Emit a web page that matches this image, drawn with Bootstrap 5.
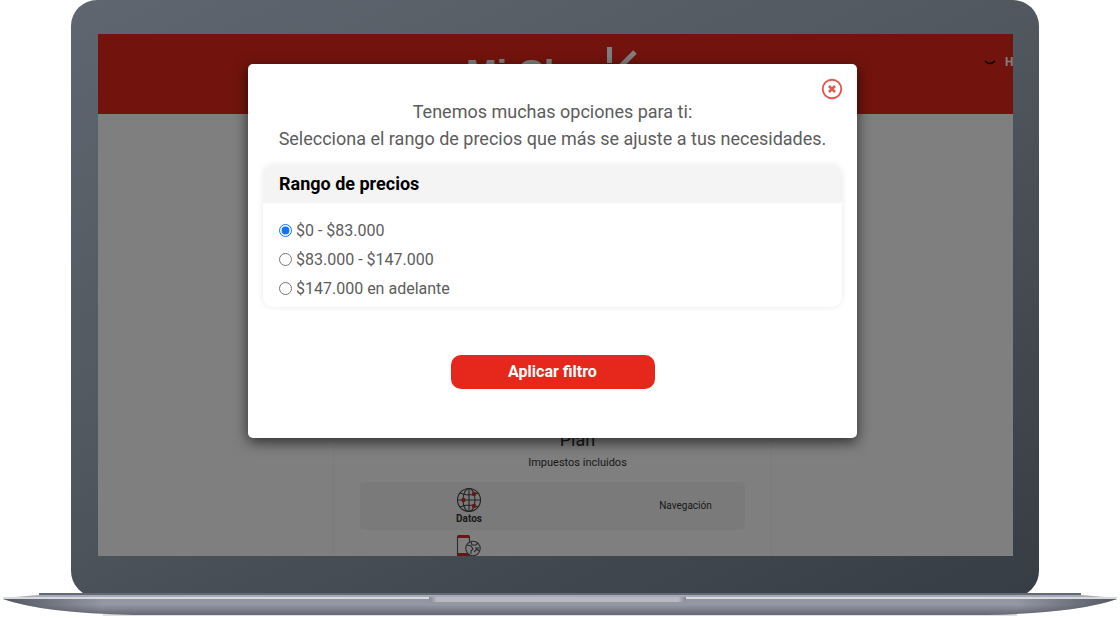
<!DOCTYPE html>
<html lang="es">
<head>
<meta charset="utf-8">
<meta name="viewport" content="width=device-width, initial-scale=1">
<title>Mi Claro - Rango de precios</title>
<link href="https://cdn.jsdelivr.net/npm/bootstrap@5.3.0/dist/css/bootstrap.min.css" rel="stylesheet">
<style>
  body { font-family: Roboto, "Liberation Sans", sans-serif; color: #5c5c5c; background: #fff; }
  .lid { margin: 0 81px -4px 71px; padding: 34px 26px 41px 27px; border-radius: 26px; background: linear-gradient(155deg, #5f666f 0%, #50575f 45%, #41484f 75%, #373d44 100%); min-height: 0; }
  .screen { background: #fff; min-height: 0; }
  .site-bar { background: #e5281b; height: 80px; color: #fff; flex: none; }
  .brand-name { font-family: "Liberation Sans", sans-serif; font-size: 37px; line-height: 40px; font-weight: 700; color: #fff; margin-left: 368px; padding-top: 20px; }
  .brand-ray { top: 13px; left: 507px; }
  .user-link { top: 19px; left: calc(100% - 29px); font-size: 12px; line-height: 18px; font-weight: 700; color: #fff; gap: 9px; white-space: nowrap; }
  .plan-card { margin: 198px 242px 0 236px; padding: 115px 25px 0; border: 1px solid #fafafa; box-shadow: 0 0 4px rgba(0,0,0,.05); color: #333; height: 600px; flex: none; }
  .plan-head { padding-left: 50px; }
  .plan-name { font-size: 18px; line-height: 24px; font-weight: 400; }
  .plan-tax { font-size: 11px; line-height: 16px; margin-top: 3px; }
  .feature { height: 48px; border-radius: 4px; font-size: 10px; line-height: 12px; }
  .feature.shaded { background: #f5f5f5; margin-top: 11px; }
  .feature-key { width: 218px; }
  .veil { background: rgba(0,0,0,.5); padding: 30px 156px 0 150px; }
  .dialog-box { background: #fff; border-radius: 5px; padding: 34px 15px 49px; box-shadow: 0 4px 14px rgba(0,0,0,.65); }
  .dialog-close { top: 14px; right: 14px; line-height: 0; }
  .intro { font-size: 18px; line-height: 27px; margin-bottom: 13px; }
  .price-panel { border-radius: 10px; box-shadow: 0 0 6px rgba(0,0,0,.09); margin-bottom: 48px; }
  .price-title { font-size: 18px; line-height: 22px; padding: 8px 16px; font-weight: 700; color: #000; background: #f4f4f4; border-radius: 10px 10px 0 0; }
  .price-options { padding: 13px 16px 4px; font-size: 16px; line-height: 29px; }
  .price-options input { width: 13px; height: 13px; margin: 0 4px 0 0; accent-color: #0d75ff; }
  .apply { width: 204px; height: 34px; font-size: 16px; line-height: 20px; font-weight: 700; border-radius: 10px; background: #e5281b; color: #fff; }
  .apply:hover { background: #c71f13; color: #fff; }
  .base { height: 25px; margin: 0 3px; flex: none; }
</style>
</head>
<body>
<div class="vh-100 d-flex flex-column overflow-hidden">
  <div class="lid flex-grow-1 d-flex flex-column">
    <div class="screen flex-grow-1 position-relative overflow-hidden d-flex flex-column">
      <header class="site-bar position-relative">
        <div class="brand-name">Mi Claro</div>
        <svg class="brand-ray position-absolute" width="34" height="24" viewBox="0 0 34 24" aria-hidden="true"><path d="M4.500 0V16M30 5L15 20" stroke="#fff" stroke-width="5" fill="none"/></svg>
        <a href="#" class="user-link position-absolute d-flex align-items-center text-decoration-none">
          <svg width="12" height="8" viewBox="0 0 12 8" aria-hidden="true"><path d="M1 3C3 5 4 5.500 6 5.500S9 5 11 3" stroke="#000" stroke-width="1.400" fill="none"/></svg>
          H
        </a>
      </header>
      <section class="plan-card">
        <div class="plan-head text-center">
          <h2 class="plan-name m-0">Plan</h2>
          <p class="plan-tax mb-0">Impuestos incluidos</p>
        </div>
        <div class="feature shaded d-flex align-items-center">
          <div class="feature-key text-center fw-bold">
            <svg class="d-block mx-auto" width="26" height="26" viewBox="0 0 26 26" fill="none" stroke="#444" stroke-width="1.100" aria-hidden="true"><circle cx="13" cy="13" r="11.500"/><ellipse cx="13" cy="13" rx="6" ry="11.500"/><path d="M13 1.500v23M1.500 13h23M4 6Q13 10 22 6M4 20Q13 16 22 20"/><g fill="#d52b1e" stroke="none"><circle cx="7.500" cy="13" r="2.200"/><circle cx="18" cy="7" r="2.200"/><circle cx="18" cy="19" r="2.200"/></g></svg>
            Datos
          </div>
          <div class="flex-grow-1 text-center ps-5">Navegación</div>
        </div>
        <div class="feature d-flex align-items-start pt-1">
          <div class="feature-key text-center">
            <svg width="26" height="26" viewBox="0 0 26 26" fill="none" stroke="#555" stroke-width="1.100" aria-hidden="true"><rect x="1.500" y="1.500" width="12" height="21" rx="1.500"/><path d="M2 2.500h11M2 20.500h11" stroke="#d52b1e" stroke-width="3"/><circle cx="17" cy="14.500" r="7.200" fill="#fff"/><path d="M11 11l4 1 2 3-2 2v3M15 8l1 3 4 0 2-2M19 14l4 0M18 18l3-3 2 2"/></svg>
          </div>
        </div>
      </section>

      <div class="veil position-absolute top-0 start-0 w-100 h-100">
        <form class="dialog-box position-relative" role="dialog" aria-label="Filtro de precios">
          <button type="button" class="dialog-close btn p-0 border-0 position-absolute" aria-label="Cerrar">
            <svg width="22" height="22" viewBox="0 0 22 22" fill="none" stroke="#df5a52" aria-hidden="true"><circle cx="11" cy="11" r="9.300" stroke-width="1.900"/><path d="M8 8l6 6M14 8l-6 6" stroke-width="2.700"/></svg>
          </button>
          <p class="intro text-center">Tenemos muchas opciones para ti:<br>Selecciona el rango de precios que más se ajuste a tus necesidades.</p>
          <fieldset class="price-panel">
            <legend class="price-title m-0">Rango de precios</legend>
            <div class="price-options">
              <div class="d-flex align-items-center"><input type="radio" name="rango" id="r1" checked><label for="r1">$0 - $83.000</label></div>
              <div class="d-flex align-items-center"><input type="radio" name="rango" id="r2"><label for="r2">$83.000 - $147.000</label></div>
              <div class="d-flex align-items-center"><input type="radio" name="rango" id="r3"><label for="r3">$147.000 en adelante</label></div>
            </div>
          </fieldset>
          <div class="text-center"><button type="button" class="apply btn border-0 p-0">Aplicar filtro</button></div>
        </form>
      </div>
    </div>
  </div>
  <svg class="base position-relative" viewBox="0 0 1114 25" preserveAspectRatio="none" aria-hidden="true">
    <defs>
      <linearGradient id="metal" x1="0" y1="0" x2="0" y2="1"><stop offset="0" stop-color="#9296a4"/><stop offset=".35" stop-color="#9497a5"/><stop offset="1" stop-color="#656873"/></linearGradient>
      <linearGradient id="tips"><stop offset="0" stop-color="#4c5058" stop-opacity=".9"/><stop offset=".09" stop-color="#4c5058" stop-opacity="0"/><stop offset=".91" stop-color="#4c5058" stop-opacity="0"/><stop offset="1" stop-color="#4c5058" stop-opacity=".9"/></linearGradient>
      <linearGradient id="notch"><stop offset="0" stop-color="#85868b"/><stop offset=".03" stop-color="#b8b8bf"/><stop offset=".97" stop-color="#b8b8bf"/><stop offset="1" stop-color="#85868b"/></linearGradient>
    </defs>
    <path d="M100 21H1014V23H100Z" fill="#dedfe0"/>
    <path d="M0 6H1114Q1074 20 984 22H130Q40 20 0 6Z" fill="url(#metal)"/>
    <path d="M0 6H1114Q1074 20 984 22H130Q40 20 0 6Z" fill="url(#tips)"/>
    <path d="M0 5L36 2H1078L1114 5Z" fill="#a4aabb"/>
    <path d="M36 0H1078V2H36Z" fill="#646a73"/>
    <path d="M0 4H1114V6H0Z" fill="#d8dada"/>
    <path d="M426 4H683V6Q683 9 679 9H430Q426 9 426 6Z" fill="url(#notch)"/>
  </svg>
</div>
<script src="https://cdn.jsdelivr.net/npm/bootstrap@5.3.0/dist/js/bootstrap.bundle.min.js"></script>
</body>
</html>
